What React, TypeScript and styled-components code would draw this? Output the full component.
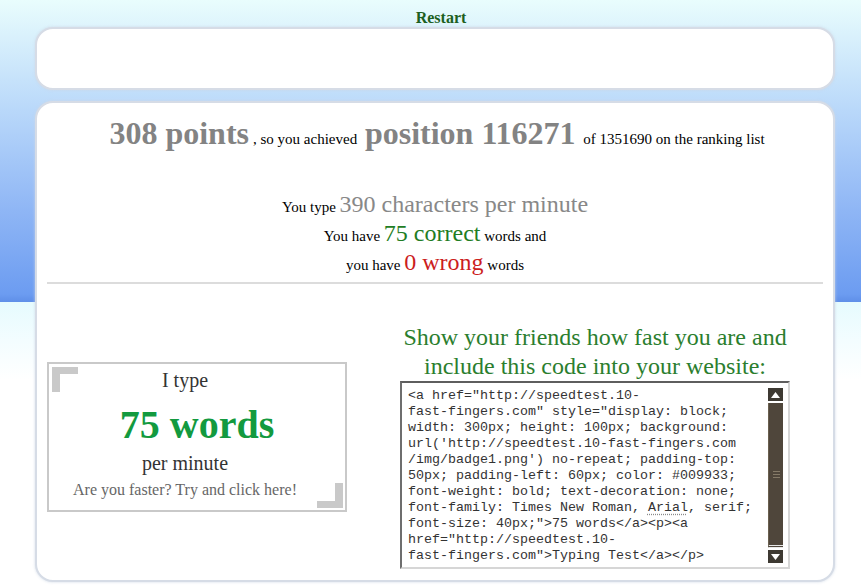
import styled, { createGlobalStyle } from "styled-components";

const SERIF = `"Liberation Serif", "Times New Roman", serif`;
const MONO = `"Liberation Mono", "Courier New", monospace`;

const CODE_LINES: (string | { before: string; marked: string; after: string })[] = [
  `<a href="http://speedtest.10-`,
  `fast-fingers.com" style="display: block;`,
  `width: 300px; height: 100px; background:`,
  `url('http://speedtest.10-fast-fingers.com`,
  `/img/badge1.png') no-repeat; padding-top:`,
  `50px; padding-left: 60px; color: #009933;`,
  `font-weight: bold; text-decoration: none;`,
  { before: "font-family: Times New Roman, ", marked: "Arial", after: ", serif;" },
  `font-size: 40px;">75 words</a><p><a`,
  `href="http://speedtest.10-`,
  `fast-fingers.com">Typing Test</a></p>`,
];

const GlobalStyle = createGlobalStyle`
  html, body {
    margin: 0;
    padding: 0;
  }
  body {
    min-height: 100vh;
    font-family: ${SERIF};
    background-color: #ffffff;
    background-image: linear-gradient(
      to bottom,
      #e9fdfd 0px,
      #b9d8fa 110px,
      #8fb6f5 210px,
      #6c9cf1 294px,
      #5f8fe8 302px,
      #e6fbfe 302px,
      #f3fdff 340px,
      #ffffff 380px
    );
    background-repeat: no-repeat;
  }
`;

const Page = styled.div`
  width: 800px;
  margin-left: 35px;
`;

const TopBar = styled.div`
  height: 19px;
  padding-top: 8px;
  padding-left: 12px;
  text-align: center;
`;

const RestartLink = styled.a`
  font-size: 16px;
  line-height: 19px;
  font-weight: bold;
  color: #1d5f1f;
  text-decoration: none;
  cursor: pointer;
`;

const Panel = styled.div<{ $height?: number }>`
  box-sizing: border-box;
  background: #ffffff;
  border: 2px solid #d6dce6;
  border-radius: 18px;
  box-shadow: 0 0 3px rgba(205, 215, 230, 0.9);
  ${({ $height }) => ($height ? `height: ${$height}px;` : "")}
`;

const ResultPanel = styled(Panel)`
  margin-top: 11px;
  padding: 12px 10px 11px;
`;

const ScoreLine = styled.div`
  text-align: center;
  line-height: 37px;
  color: #000;
  font-size: 15px;
`;

const Big = styled.span`
  margin: 0 4px;
  font-size: 32px;
  font-weight: bold;
  color: #838383;
`;

const Stats = styled.div`
  margin-top: 34px;
  text-align: center;
  font-size: 15px;
  line-height: 27px;
  color: #000;
`;

const Figure = styled.span<{ $tone: "gray" | "green" | "red" }>`
  font-size: 24px;
  line-height: 1;
  color: ${({ $tone }) =>
    $tone === "green" ? "#1f7d24" : $tone === "red" ? "#cc1d1d" : "#888888"};
`;

const Divider = styled.hr`
  margin: 3px 0 0;
  border: 0;
  border-top: 2px solid #dcdcdc;
`;

const ShareRow = styled.div`
  display: flex;
  padding-top: 39px;
`;

const Badge = styled.a`
  position: relative;
  box-sizing: border-box;
  width: 300px;
  height: 150px;
  margin-top: 39px;
  padding-top: 4px;
  border: 2px solid #c9c9c9;
  text-align: center;
  text-decoration: none;
  cursor: pointer;
`;

const Corner = styled.span<{ $at: "tl" | "br" }>`
  position: absolute;
  width: 26px;
  height: 25px;
  ${({ $at }) =>
    $at === "tl"
      ? `left: 3px; top: 3px;
         border-left: 8px solid #c9c9c9; border-top: 7px solid #c9c9c9;`
      : `right: 2px; bottom: 2px;
         border-right: 8px solid #c9c9c9; border-bottom: 7px solid #c9c9c9;`}
  box-sizing: border-box;
`;

const BadgeLine = styled.div<{ $size: number; $height: number; $muted?: boolean }>`
  padding-right: 24px;
  font-size: ${({ $size }) => $size}px;
  line-height: ${({ $height }) => $height}px;
  color: ${({ $muted }) => ($muted ? "#666666" : "#333333")};
  ${({ $muted }) => ($muted ? "margin-top: 4px;" : "")}
`;

const BadgeWords = styled.div`
  margin: 10px 0 3px;
  font-size: 40px;
  line-height: 46px;
  font-weight: bold;
  color: #139a3f;
`;

const ShareColumn = styled.div`
  width: 400px;
  margin-left: 48px;
  display: flex;
  flex-direction: column;
  align-items: center;
`;

const ShareTitle = styled.div`
  font-size: 24px;
  line-height: 29px;
  color: #2b7e2e;
  text-align: center;
`;

const CodeBox = styled.div`
  box-sizing: border-box;
  width: 390px;
  height: 188px;
  display: flex;
  background: #ffffff;
  border-style: solid;
  border-width: 2px;
  border-color: #5e5e5e #d6d6d6 #d6d6d6 #6e6e6e;
`;

const CodeText = styled.div`
  flex: 1;
  padding: 5px 0 0 6px;
  font-family: ${MONO};
  font-size: 13.33px;
  line-height: 16px;
  color: #333333;
  white-space: pre;
  overflow: hidden;
`;

const Marked = styled.span`
  text-decoration: underline dotted #8a8a8a;
  text-underline-offset: 3px;
`;

const ScrollBar = styled.div`
  width: 15px;
  margin: 5px 5px 4px 0;
  display: flex;
  flex-direction: column;
`;

const ScrollButton = styled.div`
  height: 13px;
  display: flex;
  align-items: center;
  justify-content: center;
  background: #3d3932;
`;

const Thumb = styled.div`
  flex: 1;
  margin: 2px 0;
  display: flex;
  flex-direction: column;
  align-items: center;
  justify-content: center;
  gap: 2px;
  background: #4f463b;
  border-left: 1px solid #6a604f;
  border-bottom: 3px double #e8e8e8;
`;

const Grip = styled.span`
  width: 7px;
  height: 1px;
  background: #857a68;
`;

const Arrow = ({ down }: { down?: boolean }) => (
  <svg width="9" height="6" viewBox="0 0 9 6">
    <polygon points={down ? "0,0 9,0 4.5,6" : "0,6 9,6 4.5,0"} fill="#ffffff" />
  </svg>
);

const App = () => {
  return (
    <Page>
      <GlobalStyle />
      <TopBar>
        <RestartLink>Restart</RestartLink>
      </TopBar>
      <Panel $height={63} />
      <ResultPanel>
        <ScoreLine>
          <Big>308 points</Big>, so you achieved <Big>position 116271</Big> of
          1351690 on the ranking list
        </ScoreLine>
        <Stats>
          <div>
            You type <Figure $tone="gray">390 characters per minute</Figure>
          </div>
          <div>
            You have <Figure $tone="green">75 correct</Figure> words and
          </div>
          <div>
            you have <Figure $tone="red">0 wrong</Figure> words
          </div>
        </Stats>
        <Divider />
        <ShareRow>
          <Badge>
            <Corner $at="tl" />
            <Corner $at="br" />
            <BadgeLine $size={20} $height={24}>
              I type
            </BadgeLine>
            <BadgeWords>75 words</BadgeWords>
            <BadgeLine $size={20} $height={24}>
              per minute
            </BadgeLine>
            <BadgeLine $size={16} $height={22} $muted>
              Are you faster? Try and click here!
            </BadgeLine>
          </Badge>
          <ShareColumn>
            <ShareTitle>
              Show your friends how fast you are and
              <br />
              include this code into your website:
            </ShareTitle>
            <CodeBox>
              <CodeText>
                {CODE_LINES.map((line, i) => (
                  <div key={i}>
                    {typeof line === "string" ? (
                      line
                    ) : (
                      <>
                        {line.before}
                        <Marked>{line.marked}</Marked>
                        {line.after}
                      </>
                    )}
                  </div>
                ))}
              </CodeText>
              <ScrollBar>
                <ScrollButton>
                  <Arrow />
                </ScrollButton>
                <Thumb>
                  <Grip />
                  <Grip />
                  <Grip />
                </Thumb>
                <ScrollButton>
                  <Arrow down />
                </ScrollButton>
              </ScrollBar>
            </CodeBox>
          </ShareColumn>
        </ShareRow>
      </ResultPanel>
    </Page>
  );
};

export default App;
